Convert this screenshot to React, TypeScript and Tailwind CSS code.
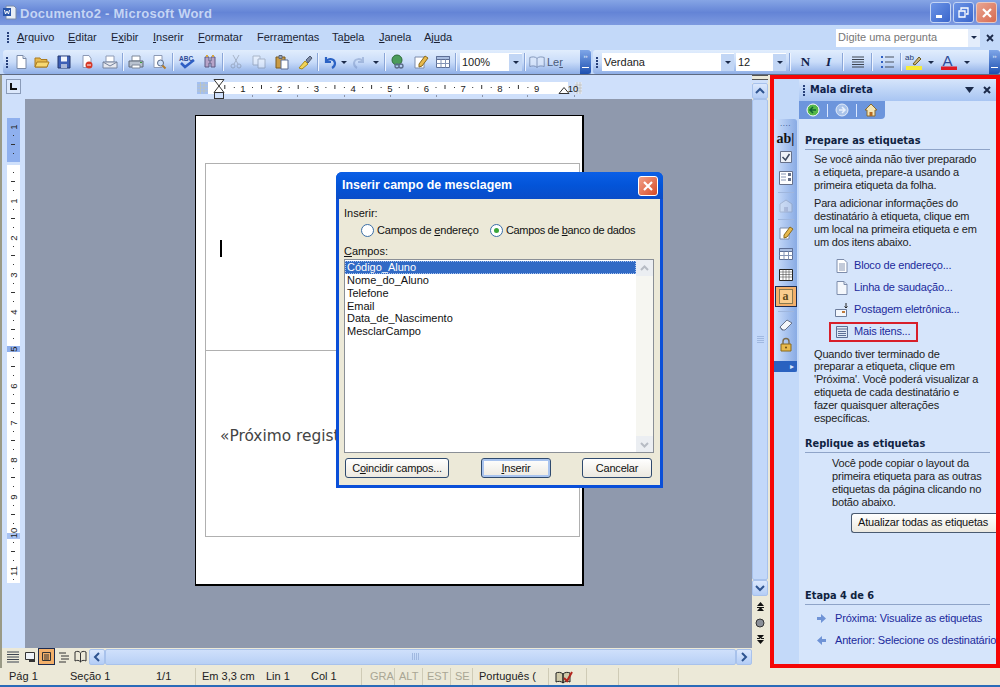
import React from "react";

const FONT = { fontFamily: '"Liberation Sans", Arial, sans-serif' };

type IP = { children: React.ReactNode; w?: number; cls?: string };
const Ico = ({ children, w = 16, cls = "" }: IP) => (
  <svg width={w} height="16" viewBox={`0 0 ${w} 16`} className={cls}>{children}</svg>
);

const NewDoc = () => <Ico><path d="M4 1.500h6l3 3v10H4z" fill="#fff" stroke="#7a8aa8" /><path d="M10 1.500v3h3" fill="#dfe8f8" stroke="#7a8aa8" /></Ico>;
const Open = () => <Ico><path d="M1 4h5l1 1.500h6V13H1z" fill="#e8b94c" stroke="#a87a20" /><path d="M3 8h12l-2 5H1z" fill="#f7d872" stroke="#a87a20" /></Ico>;
const Save = () => <Ico><path d="M2 2h12v12H2z" fill="#3d5fb5" stroke="#24386f" /><path d="M5 2.500h6v5H5z" fill="#f2f5fb" /><path d="M5 10h6v4H5z" fill="#a9b7d8" /></Ico>;
const Perm = () => <Ico><path d="M4 1.500h6l2 3v9H4z" fill="#fff" stroke="#8d9ab5" /><circle cx="10" cy="11" r="3.500" fill="#d63a2a" /><path d="M8 11h4" stroke="#fff" /></Ico>;
const MailI = () => <Ico><path d="M4 2h8v6H4z" fill="#fff" stroke="#8d9ab5" /><path d="M1 8h14v6H1z" fill="#e6e8ee" stroke="#77849e" /><path d="M1 8l7 4 7-4" fill="none" stroke="#77849e" /></Ico>;
const Print = () => <Ico><path d="M4 2h8v5H4z" fill="#fff" stroke="#7d8798" /><path d="M1 7h14v6H1z" fill="#b9c2cf" stroke="#5e6878" /><path d="M4 11h8v3H4z" fill="#fff" stroke="#7d8798" /><path d="M12 8.500h2" stroke="#3d9a3d" /></Ico>;
const Preview = () => <Ico><path d="M3 1.500h8v12H3z" fill="#fff" stroke="#8d9ab5" /><circle cx="9.500" cy="9" r="3" fill="#cfe2fb" stroke="#5a6a88" /><path d="M11.500 11.500l3 3" stroke="#b27b2b" strokeWidth="2" /></Ico>;
const Spell = () => <Ico w={18}><text x="1" y="6.500" fontSize="6.500" fontWeight="700" fill="#2e4a96" fontFamily="Liberation Sans">ABC</text><path d="M3 9l4 4 9-7" fill="none" stroke="#2e5fc4" strokeWidth="2.500" /></Ico>;
const Research = () => <Ico><path d="M3 3h4v4h2V3h4v10H9V9H7v4H3z" fill="#b7a4c8" stroke="#5d5a82" /><path d="M4 1h2v2H4zM10 1h2v2h-2z" fill="#d6a73e" /></Ico>;
const Cut = () => <Ico cls="opacity-40"><path d="M5 1l5 9M11 1L6 10" stroke="#6b7280" /><circle cx="5" cy="12" r="2" fill="none" stroke="#6b7280" /><circle cx="11" cy="12" r="2" fill="none" stroke="#6b7280" /></Ico>;
const Copy = () => <Ico cls="opacity-40"><path d="M2 2h7v9H2z" fill="#fff" stroke="#6b7280" /><path d="M7 5h7v9H7z" fill="#fff" stroke="#6b7280" /></Ico>;
const Paste = () => <Ico><path d="M2 3h9v11H2z" fill="#c99b45" stroke="#7b5a1e" /><path d="M5 1.500h3v3H5z" fill="#9aa5b8" stroke="#5d6678" /><path d="M7 6h7v9H7z" fill="#fff" stroke="#5d6f96" /></Ico>;
const Painter = () => <Ico><path d="M2 14l6-7 3 3-6 5z" fill="#f2d456" stroke="#a98a1c" /><path d="M9 6l4-4 2 2-4 5z" fill="#7e8ba5" stroke="#4d5870" /></Ico>;
const Undo = () => <Ico><path d="M5 3v5h5M5 8c2-4 8-4 9 1 0 2-1 4-3 5" fill="none" stroke="#2b62c4" strokeWidth="2.200" /></Ico>;
const Redo = () => <Ico cls="opacity-40"><path d="M11 3v5H6M11 8C9 4 3 4 2 9c0 2 1 4 3 5" fill="none" stroke="#6b85b8" strokeWidth="2" /></Ico>;
const Web = () => <Ico><circle cx="7" cy="6" r="5" fill="#4b9c5a" stroke="#2d6b3a" /><path d="M5 12a2 2 0 0 1 4 0a2 2 0 0 1-4 0zM9 12a2 2 0 0 1 4 0a2 2 0 0 1-4 0z" fill="none" stroke="#5a6a88" strokeWidth="1.300" /></Ico>;
const DocEdit = () => <Ico><path d="M2 3h9v11H2z" fill="#fff" stroke="#7d8cab" /><path d="M6 10l6-8 3 2-6 8-3 1z" fill="#e8b94c" stroke="#8a6a1c" /></Ico>;
const TableI = ({ dim = false }: { dim?: boolean }) => <Ico cls={dim ? "opacity-40" : ""}><path d="M1.500 2.500h13v11h-13z" fill="#fff" stroke="#5d6f96" /><path d="M1.500 2.500h13v3h-13z" fill="#a9bde0" stroke="#5d6f96" /><path d="M6 5.500v8M10.500 5.500v8M1.500 9.500h13" stroke="#8494b5" /></Ico>;
const BookI = () => <Ico w={18}><path d="M1 3c3-1 6-1 8 1 2-2 5-2 8-1v10c-3-1-6-1-8 1-2-2-5-2-8-1zM9 4v10" fill="#dce8fb" stroke="#5a6f98" /></Ico>;
const Bars = ({ cls = "" }: { cls?: string }) => <Ico cls={cls}><path d="M2 3h12M2 5.500h12M2 8h12M2 10.500h12M2 13h12" stroke="#3d4450" /></Ico>;
const BulletsI = () => <Ico><path d="M6 3h9M6 8h9M6 13h9" stroke="#48505e" /><path d="M2 2h2v2H2zM2 7h2v2H2zM2 12h2v2H2z" fill="#2e5fc4" /></Ico>;
const Highlight = () => <svg width="18" height="18" viewBox="0 0 18 18"><text x="0" y="7" fontSize="8" fill="#1e3a70" fontFamily="Liberation Sans">ab</text><path d="M8 11l6-7 2 2-6 6z" fill="#c9b37a" stroke="#6b5a20" /><path d="M1 13h16v4H1z" fill="#f5ec3a" /></svg>;
const ColorA = () => <svg width="18" height="18" viewBox="0 0 18 18"><text x="2.500" y="12.500" fontSize="15" fontWeight="400" fill="#2e4a96" fontFamily="Liberation Sans">A</text><path d="M1 13.500h16v3.500H1z" fill="#e01b24" /></svg>;

const Sep = () => <div className="w-px h-[18px] mx-[1px] bg-[#8aa6d8] border-r border-r-[#eef4ff] box-content shrink-0" />;
const SepM = () => <div className="w-px h-[18px] mx-[2px] bg-[#8aa6d8] border-r border-r-[#eef4ff] box-content shrink-0" />;
const SepW = () => <div className="w-px h-[18px] mx-[3px] bg-[#8aa6d8] border-r border-r-[#eef4ff] box-content shrink-0" />;
const Drop = () => <span className="w-0 h-0 mx-[4px] border-x-[3px] border-x-transparent border-t-[3px] border-t-[#1b2a4a]" />;
const Slot = ({ children, w = 23 }: { children: React.ReactNode; w?: number }) => (
  <div className="flex items-center justify-center shrink-0 h-[22px]" style={{ width: w }}>{children}</div>
);
const Grip = () => (
  <div className="flex flex-col gap-[1px] w-[4px] ml-[3px] shrink-0">
    {[0, 1, 2, 3].map(i => <div key={i} className="w-[2px] h-[2px] bg-[#27407a]" />)}
  </div>
);
const Overflow = () => (
  <div className="w-[11px] h-[24px] shrink-0 bg-gradient-to-b from-[#7fa6e8] to-[#1c4fb0] rounded-r-[3px] flex flex-col items-center justify-between py-[3px]">
    <span className="text-[6px] leading-[6px] text-white">››</span>
    <span className="w-[7px] h-[4px] border-t border-t-white" />
  </div>
);
const ComboArrow = () => (
  <div className="w-[13px] h-[17px] bg-[#c2d6f5] flex items-center justify-center">
    <span className="w-0 h-0 border-x-[3px] border-x-transparent border-t-[3px] border-t-[#1b2a4a]" />
  </div>
);
const Combo = ({ text, w }: { text: string; w: number }) => (
  <div className="h-[18px] bg-white flex items-center justify-between shrink-0 pl-[2px]" style={{ width: w }}>
    <span className="text-[11px] text-[#222]">{text}</span>
    <ComboArrow />
  </div>
);

const Menu = ({ pre, u, post, w }: { pre: string; u: string; post: string; w: number }) => (
  <span className="text-[#1a1f33] shrink-0" style={{ width: w }}>{pre}<u>{u}</u>{post}</span>
);

const TopRuler = () => {
  const xn = (n: number) => 13.300 + 36.700 * n;
  return (
    <svg width="396" height="24" viewBox="0 0 396 24" className="ml-[172px] shrink-0">
      <rect x="4" y="7" width="11" height="12" fill="#8fb0ee" opacity=".7" />
      <path d="M7.500 7v12M11 7v12M4 10h11M4 13h11M4 16h11" stroke="#c9c7a8" strokeWidth=".6" />
      <rect x="15" y="7" width="360" height="12" fill="#fff" />
      <rect x="382" y="7" width="7" height="12" fill="#dfe7f5" />
      <path d="M384 7v12M387 7v12M382 10h7M382 13h7M382 16h7" stroke="#b9b7a8" strokeWidth=".6" />
      {[1, 2, 3, 4, 5, 6, 7, 8, 9, 10].map(n => (
        <text key={n} x={n === 10 ? 380 : xn(n)} y="16.500" fontSize="9.500" textAnchor="middle" fill="#222" fontFamily="Liberation Sans">{n}</text>
      ))}
      {[0, 1, 2, 3, 4, 5, 6, 7, 8, 9].map(n => (
        <g key={n} fill="#333">
          {n > 0 && n < 9 && <rect x={xn(n) + 9} y="12" width="1" height="1" />}
          {n < 9 && <rect x={xn(n) + 18} y="10" width="1" height="4" />}
          {n < 9 && <rect x={xn(n) + 27.500} y="12" width="1" height="1" />}
        </g>
      ))}
      {[59, 104, 151, 197, 243, 289, 334, 381].map(x => <rect key={x} x={x} y="20" width="1" height="2" fill="#8b94a8" />)}
      <path d="M21 4.500h10l-5 6.500z" fill="#fff" stroke="#333" />
      <path d="M21 17.500h10l-5-6.500z" fill="#fff" stroke="#333" />
      <rect x="21.500" y="17.500" width="9" height="6" fill="#cfe0fb" stroke="#333" />
      <path d="M366 18.500l5-6 5 6z" fill="#fff" stroke="#333" />
    </svg>
  );
};

const VRuler = () => {
  const yn = (n: number) => 163 + 37 * n - 99;
  return (
    <svg width="23" height="550" viewBox="2 0 23 550" className="shrink-0">
      <rect x="7" y="19" width="13" height="44" fill="#8fb0ee" />
      <rect x="7" y="66" width="13" height="418" fill="#fff" />
      <rect x="7" y="434" width="13" height="6" fill="#a8c2f2" />
      <rect x="7" y="247" width="13" height="6" fill="#8fb0ee" />
      <text transform="translate(16.500 28) rotate(-90)" fontSize="9.500" textAnchor="middle" fill="#222" fontFamily="Liberation Sans">1</text>
      {[1, 2, 3, 4, 5, 6, 7, 8, 9, 10, 11].map(n => (
        <text key={n} transform={`translate(16.500 ${yn(n) + (n === 10 ? -1 : 0)}) rotate(-90)`} fontSize="9.500" textAnchor="middle" dx="-1" fill="#222" fontFamily="Liberation Sans">{n}</text>
      ))}
      {[-1, 0, 1, 2, 3, 4, 5, 6, 7, 8, 9, 10, 11].map(n => (
        <g key={n} fill="#333">
          <rect x="13" y={yn(n) + 9} width="1" height="1" />
          {n < 11 && <rect x="11" y={yn(n) + 18} width="4" height="1" />}
          {n < 11 && <rect x="13" y={yn(n) + 27} width="1" height="1" />}
        </g>
      ))}
    </svg>
  );
};

const ScrollBtn = ({ dir }: { dir: "up" | "down" | "left" | "right" }) => {
  const d = { up: "M3 9l4-4 4 4", down: "M3 5l4 4 4-4", left: "M9 3L5 7l4 4", right: "M5 3l4 4-4 4" }[dir];
  return (
    <div className="w-[16px] h-[16px] shrink-0 rounded-[2px] bg-gradient-to-b from-[#dbe8fd] to-[#b4cdf6] border border-[#a8c2ec] flex items-center justify-center">
      <svg width="14" height="14" viewBox="0 0 14 14"><path d={d} fill="none" stroke="#2e5490" strokeWidth="2" /></svg>
    </div>
  );
};

const RB = ({ on }: { on?: boolean }) => (
  <span className="w-[13px] h-[13px] rounded-full border border-[#3a6ea5] bg-white flex items-center justify-center shrink-0">
    {on && <span className="w-[5px] h-[5px] rounded-full bg-[#3aa63a]" />}
  </span>
);

const Btn = ({ children, w, def }: { children: React.ReactNode; w: number; def?: boolean }) => (
  <div style={{ width: w }} className={`h-[20px] rounded-[3px] border border-[#2f4a6e] flex items-center justify-center text-[11px] text-[#111] tracking-[-0.2px] bg-gradient-to-b from-white to-[#ece9e0] ${def ? "shadow-[inset_0_0_0_2px_#a9c4ef]" : ""}`}>
    {children}
  </div>
);

const Dialog = () => (
  <div className="absolute left-[336px] top-[172px] w-[327px] h-[316px] rounded-t-[6px] bg-[#0a4fd8] p-[3px] pt-0 flex flex-col z-10">
    <div className="h-[27px] shrink-0 flex items-center justify-between bg-gradient-to-b from-[#0b5fe6] via-[#0354d8] to-[#0a4cc8] -mx-[3px] pl-[6px] pr-[5px] rounded-t-[6px]">
      <span className="text-white text-[12.400px] font-bold">Inserir campo de mesclagem</span>
      <div className="w-[20px] h-[20px] rounded-[3px] border border-white bg-gradient-to-br from-[#f0a088] to-[#d6471f] flex items-center justify-center">
        <svg width="12" height="12" viewBox="0 0 12 12"><path d="M2 2l8 8M10 2l-8 8" stroke="#fff" strokeWidth="2.200" /></svg>
      </div>
    </div>
    <div className="flex-1 bg-[#ece9d8] px-[5px] pt-[7px] text-[11px] text-[#111] flex flex-col">
      <div className="leading-[14px]">Inserir:</div>
      <div className="flex items-center mt-[2px] ml-[17px] h-[17px] whitespace-nowrap tracking-[-0.2px]">
        <RB /><span className="ml-[3px] w-[101px] shrink-0">Campos de <u>e</u>ndereço</span>
        <span className="ml-[12px]"><RB on /></span><span className="ml-[3px] tracking-[-0.35px]">Campos de <u>b</u>anco de dados</span>
      </div>
      <div className="mt-[5px] leading-[14px]"><u>C</u>ampos:</div>
      <div className="mt-[1px] h-[194px] w-[310px] border border-[#8a8f96] bg-white flex text-[#111]">
        <div className="flex-1 min-w-0 pt-[1px] leading-[12.800px]">
          <div className="bg-[#316ac5] text-white pl-[2px] h-[13px] outline-dotted outline-1 outline-offset-[-1px] outline-[#aac4ee]">Código_Aluno</div>
          {["Nome_do_Aluno", "Telefone", "Email", "Data_de_Nascimento", "MesclarCampo"].map(t => <div key={t} className="pl-[2px]">{t}</div>)}
        </div>
        <div className="w-[17px] shrink-0 bg-[#f6f6f1] flex flex-col justify-between">
          <div className="h-[16px] bg-[#ebeef2] flex items-center justify-center"><svg width="11" height="9" viewBox="0 0 11 9"><path d="M2 6l3.500-3.500L9 6" fill="none" stroke="#b7bcc4" strokeWidth="2" /></svg></div>
          <div className="h-[16px] bg-[#ebeef2] flex items-center justify-center"><svg width="11" height="9" viewBox="0 0 11 9"><path d="M2 3l3.500 3.500L9 3" fill="none" stroke="#b7bcc4" strokeWidth="2" /></svg></div>
        </div>
      </div>
      <div className="mt-[5px] flex w-[310px] pl-[1px]">
        <Btn w={104}>C<u>o</u>incidir campos...</Btn>
        <div className="ml-[32px]"><Btn w={70} def><span><u>I</u>nserir</span></Btn></div>
        <div className="ml-[31px]"><Btn w={70}>Cancelar</Btn></div>
      </div>
    </div>
  </div>
);

const Heading = ({ children }: { children: string }) => (
  <div className="font-bold leading-[14px] tracking-normal text-[#0f2240] border-b border-b-[#8fa4c8] pb-[1px] mr-[6px]" style={{ fontFamily: '"DejaVu Sans", sans-serif', fontSize: 9.800 }}>{children}</div>
);

const Lnk = ({ icon, text }: { icon: React.ReactNode; text: string }) => (
  <div className="flex items-center h-[22px] ml-[26px]">
    <div className="w-[22px] flex justify-center">{icon}</div>
    <span className="ml-[1px] text-[#1c2a9c]">{text}</span>
  </div>
);

const Strip = () => {
  const dl = (c: React.ReactNode, on = false, h = 22) => (
    <div className={`w-[22px] shrink-0 flex items-center justify-center ${on ? "bg-[#f3b06a] border border-[#1d2b4f]" : ""}`} style={{ height: h }}>{c}</div>
  );
  const line = <div className="h-px w-[16px] my-[2px] bg-[#9fb6dd] mx-auto shrink-0" />;
  return (
    <div className="w-[23px] shrink-0 mt-[40px] h-[253px] bg-gradient-to-r from-[#cfe0fb] to-[#89abe4] rounded-tr-[3px] flex flex-col items-center">
      <div className="text-[8px] leading-[10px] tracking-[0.500px] text-[#27407a] h-[9px] shrink-0">....</div>
      {dl(<span className="text-[14px] font-semibold text-[#111]" style={{ fontFamily: '"Liberation Serif", serif' }}>ab|</span>, false, 20)}
      {dl(<Ico><path d="M2.500 2.500h11v11h-11z" fill="#eef2f8" stroke="#66718a" /><path d="M4.500 8l3 3 4-6" fill="none" stroke="#3d4a60" strokeWidth="1.500" /></Ico>, false, 18)}
      {dl(<Ico><path d="M1.500 1.500h13v13h-13z" fill="#fff" stroke="#66718a" /><path d="M3 4h5M3 7h5M3 10h5" stroke="#8796b3" /><path d="M10 3h3v3h-3zM10 8h3v3h-3z" fill="#66718a" /></Ico>, false, 24)}
      {line}
      {dl(<Ico cls="opacity-40"><path d="M2 6l6-4 6 4v8H2z" fill="#e8edf4" stroke="#8a93a4" /><path d="M6 9h4v5H6z" fill="#aab" /></Ico>)}
      {line}
      {dl(<DocEdit />)}
      {dl(<TableI />, false, 20)}
      {dl(<Ico><path d="M1.500 2.500h13v11h-13z" fill="#fff" stroke="#222" /><path d="M1.500 5h13M1.500 7.500h13M1.500 10h13M5 2.500v11M8 2.500v11M11 2.500v11" stroke="#333" strokeDasharray="1 1" /></Ico>)}
      {dl(<span className="text-[12px] font-bold text-[#5d4a1a] border border-[#8a7a50] px-[3px] leading-[13px] bg-[#f9cd8e]" style={{ fontFamily: '"Liberation Serif", serif' }}>a</span>, true, 21)}
      <div className="h-px w-[16px] mt-[4px] mb-[3px] bg-[#9fb6dd] shrink-0" />
      {dl(<Ico><path d="M2 10l7-7 5 3-7 7H4z" fill="#f4f6fa" stroke="#66718a" /><path d="M2 10l3 3" stroke="#66718a" /></Ico>, false, 20)}
      {dl(<Ico><path d="M3 7h10v7H3z" fill="#e8b94c" stroke="#8a6a1c" /><path d="M5 7V4.500a3 3 0 0 1 6 0V7" fill="none" stroke="#7a6a4a" strokeWidth="1.400" /><circle cx="8" cy="10.500" r="1" fill="#6b4a10" /></Ico>, false, 20)}
      <div className="mt-auto w-full h-[11px] bg-[#2a62c0] flex items-center justify-end pr-[3px] rounded-br-[2px]"><span className="text-[8px] leading-[8px] text-[#dbe8ff]">▸</span></div>
    </div>
  );
};

const Pane = () => (
  <div className="w-[230px] shrink-0 border-[4px] border-[#f50606] flex bg-[#c3d9f9] overflow-hidden relative">
    <Strip />
    <div className="w-[2px] shrink-0" />
    <div className="flex-1 min-w-0 flex flex-col">
      <div className="h-[22px] shrink-0 flex items-center bg-gradient-to-b from-[#d6e5fb] to-[#a8c5f2] pl-[1px] pr-[4px]">
        <Grip />
        <span className="ml-[3px] font-bold text-[#10224a]" style={{ fontFamily: '"DejaVu Sans", sans-serif', fontSize: 9.800 }}>Mala direta</span>
        <svg width="9" height="6" viewBox="0 0 9 6" className="ml-auto"><path d="M0 0h9L4.500 6z" fill="#1b2a4a" /></svg>
        <svg width="10" height="10" viewBox="0 0 10 10" className="ml-[8px]"><path d="M2 2l6 6M8 2L2 8" stroke="#1b2a4a" strokeWidth="2" /></svg>
      </div>
      <div className="flex-1 bg-[#d6e5fb] flex flex-col relative text-[#222] text-[11px] leading-[12.800px]">
        <div className="h-[18px] w-[86px] bg-[#6c95dc] rounded-br-[4px] flex items-center pl-[7px] gap-[7px]">
          <svg width="14" height="14" viewBox="0 0 14 14"><circle cx="7" cy="7" r="6" fill="#55b848" stroke="#fff" /><path d="M10 7H4m3-3L4 7l3 3" fill="none" stroke="#163" strokeWidth="1.500" /></svg>
          <div className="w-px h-[13px] bg-[#dbe8ff]" />
          <svg width="14" height="14" viewBox="0 0 14 14"><circle cx="7" cy="7" r="6" fill="#a9c3ea" stroke="#e3ecfa" /><path d="M4 7h6M7 4l3 3-3 3" fill="none" stroke="#e8f0fc" strokeWidth="1.500" /></svg>
          <div className="w-px h-[13px] bg-[#dbe8ff]" />
          <svg width="14" height="14" viewBox="0 0 14 14"><path d="M7 1L1 7h2v6h8V7h2z" fill="#f4e6b6" stroke="#8a6a2c" /><path d="M5.500 9h3v4h-3z" fill="#b66a22" /></svg>
        </div>
        <div className="pl-[6px] pt-[15px] flex-1 flex flex-col whitespace-nowrap tracking-[-0.18px]">
          <Heading>Prepare as etiquetas</Heading>
          <div className="pl-[9px] mt-[3px]">
            <p>Se você ainda não tiver preparado<br />a etiqueta, prepare-a usando a<br />primeira etiqueta da folha.</p>
            <p className="mt-[6px]">Para adicionar informações do<br />destinatário à etiqueta, clique em<br />um local na primeira etiqueta e em<br />um dos itens abaixo.</p>
          </div>
          <div className="mt-[6px]">
            <Lnk text="Bloco de endereço..." icon={<Ico><path d="M3 1.500h7l3 3v10H3z" fill="#fff" stroke="#7d8cab" /><path d="M5 6h6M5 8h6M5 10h6M5 12h6" stroke="#8796b3" /></Ico>} />
            <Lnk text="Linha de saudação..." icon={<Ico><path d="M3 1.500h7l3 3v10H3z" fill="#f4f7fc" stroke="#7d8cab" /><path d="M10 1.500v3h3" fill="#dde6f5" stroke="#7d8cab" /></Ico>} />
            <Lnk text="Postagem eletrônica..." icon={<Ico><path d="M1.500 7.500h11v7h-11z" fill="#f4f7fc" stroke="#6d7c9a" /><path d="M12 1v5M10.500 4.500L12 6l1.500-1.500" fill="none" stroke="#222" /><path d="M8 9h3v2H8z" fill="#c07a3a" /></Ico>} />
            <div className="relative h-[22px]">
              <Lnk text="Mais itens..." icon={<Ico><path d="M2.500 2.500h11v11h-11z" fill="#dfe8f6" stroke="#5d6f96" /><path d="M2.500 5h11M4 7.500h8M4 9.500h8M4 11.500h8" stroke="#5d6f96" /></Ico>} />
              <div className="absolute left-[24px] top-[1px] w-[89px] h-[20px] border-2 border-[#d81f2a]" />
            </div>
          </div>
          <div className="pl-[9px] mt-[5px]">
            <p>Quando tiver terminado de<br />preparar a etiqueta, clique em<br />'Próxima'. Você poderá visualizar a<br />etiqueta de cada destinatário e<br />fazer quaisquer alterações<br />específicas.</p>
          </div>
          <div className="mt-[13px]"><Heading>Replique as etiquetas</Heading></div>
          <div className="pl-[27px] mt-[4px]">
            <p>Você pode copiar o layout da<br />primeira etiqueta para as outras<br />etiquetas da página clicando no<br />botão abaixo.</p>
          </div>
          <div className="ml-[46px] mt-[4px] h-[20px] w-[150px] rounded-l-[3px] bg-gradient-to-b from-white to-[#ece9e0] border border-[#4a5a70] border-r-0 flex items-center pl-[6px] text-[#111]">Atualizar todas as etiquetas</div>
          <div className="mt-auto">
            <Heading>Etapa 4 de 6</Heading>
            <div className="flex items-center h-[22px] mt-[2px] ml-[12px] gap-[9px] text-[#1c2a9c]">
              <svg width="9" height="9" viewBox="0 0 9 9" className="shrink-0"><path d="M0 3h4V0l5 4.500L4 9V6H0z" fill="#6f93d6" /></svg>Próxima: Visualize as etiquetas
            </div>
            <div className="flex items-center h-[22px] ml-[12px] gap-[9px] text-[#1c2a9c] mb-[13px]">
              <svg width="9" height="9" viewBox="0 0 9 9" className="shrink-0"><path d="M9 3H5V0L0 4.500 5 9V6h4z" fill="#6f93d6" /></svg>Anterior: Selecione os destinatários
            </div>
          </div>
        </div>
      </div>
    </div>
  </div>
);

const Field = ({ w, children, cls = "" }: { w: number; children?: React.ReactNode; cls?: string }) => (
  <div style={{ width: w }} className={`h-full shrink-0 border-r border-r-[#cfcbb6] flex items-center pl-[1px] ${cls}`}>{children}</div>
);

export default function App() {
  return (
    <div className="w-[1000px] h-[687px] relative overflow-hidden flex flex-col bg-[#ece9d8] text-[11px]" style={FONT}>
      {/* Title */}
      <div className="h-[25px] shrink-0 bg-gradient-to-b from-[#86a5e5] via-[#6484d6] to-[#7d9ae0] flex items-center pl-[3px] pr-[3px]">
        <svg width="14" height="15" viewBox="0 0 14 15"><path d="M3 1h8l2 2v11H3z" fill="#e8edf6" stroke="#7a8aa8" /><path d="M0 3h8v8H0z" fill="#2a55a8" /><path d="M1.500 5l1 4 1.500-3 1.500 3 1-4" fill="none" stroke="#fff" /></svg>
        <span className="ml-[3px] mt-[2px] text-[13px] tracking-[0.25px] font-bold text-[#c5d5f4]">Documento2 - Microsoft Word</span>
        <div className="ml-auto flex gap-[2px]">
          {[0, 1].map(i => (
            <div key={i} className="w-[21px] h-[21px] rounded-[3px] border border-[#c5d5f4] bg-gradient-to-br from-[#6d94e6] to-[#3a66cc] flex items-center justify-center">
              {i === 0 ? <span className="w-[6px] h-[3px] mt-[8px] -ml-[4px] bg-white" /> :
                <svg width="11" height="11" viewBox="0 0 11 11"><path d="M3 3V1h7v6H8M1 4h6v6H1z" fill="none" stroke="#fff" strokeWidth="1.300" /></svg>}
            </div>
          ))}
          <div className="w-[21px] h-[21px] rounded-[3px] border border-[#e8c8c0] bg-gradient-to-br from-[#e8a592] to-[#d86a50] flex items-center justify-center">
            <svg width="12" height="12" viewBox="0 0 12 12"><path d="M2 2l8 8M10 2l-8 8" stroke="#fff" strokeWidth="2.200" /></svg>
          </div>
        </div>
      </div>
      {/* Menu */}
      <div className="h-[25px] shrink-0 bg-[#c3d9f9] flex items-center pl-[4px] pr-[5px]">
        <Grip />
        <div className="ml-[6px] flex">
          <Menu pre="" u="A" post="rquivo" w={51} />
          <Menu pre="" u="E" post="ditar" w={43} />
          <Menu pre="E" u="x" post="ibir" w={42} />
          <Menu pre="" u="I" post="nserir" w={45} />
          <Menu pre="" u="F" post="ormatar" w={59} />
          <Menu pre="Ferra" u="m" post="entas" w={75} />
          <Menu pre="Ta" u="b" post="ela" w={47} />
          <Menu pre="" u="J" post="anela" w={45} />
          <Menu pre="Aj" u="u" post="da" w={30} />
        </div>
        <div className="ml-auto w-[132px] h-[18px] bg-white text-[#777] flex items-center pl-[2px]">Digite uma pergunta</div>
        <div className="w-[12px] h-[18px] flex items-center justify-center bg-[#e4edfb]"><span className="w-0 h-0 border-x-[3px] border-x-transparent border-t-[3px] border-t-[#1b2a4a]" /></div>
        <svg width="10" height="10" viewBox="0 0 10 10" className="ml-[5px]"><path d="M2 2l6 6M8 2L2 8" stroke="#1b2a4a" strokeWidth="1.800" /></svg>
      </div>
      {/* Toolbars */}
      <div className="h-[24px] shrink-0 bg-[#c3d9f9] flex items-center pl-[3px]">
        <div className="flex items-center h-[24px] w-[588px] shrink-0 bg-gradient-to-b from-[#e1edfd] via-[#c9dcf9] to-[#8eaee6] rounded-l-[3px]">
          <Grip />
          <div className="flex items-center">
            <Slot w={21}><NewDoc /></Slot><Slot w={22}><Open /></Slot><Slot w={22}><Save /></Slot><Slot w={23}><Perm /></Slot><Slot w={23}><MailI /></Slot><Sep />
            <Slot w={22}><Print /></Slot><Slot w={24}><Preview /></Slot><Sep />
            <Slot w={24}><Spell /></Slot><Slot w={22}><Research /></Slot><Sep />
            <Slot w={22}><Cut /></Slot><Slot w={23}><Copy /></Slot><Slot w={23}><Paste /></Slot><Slot w={23}><Painter /></Slot><Sep />
            <Slot w={17}><Undo /></Slot><Drop /><Slot w={18}><Redo /></Slot><Drop /><Sep />
            <Slot w={22}><Web /></Slot><Slot w={23}><DocEdit /></Slot><Slot w={22}><TableI /></Slot><Sep />
            <div className="ml-[2px]"><Combo text="100%" w={62} /></div>
            <div className="ml-[1px]"><Sep /></div>
            <div className="flex items-center text-[#4a5a78] ml-[1px]"><span className="opacity-70 scale-90"><BookI /></span><span className="ml-[1px]">Le<u>r</u></span></div>
          </div>
          <div className="ml-auto"><Overflow /></div>
        </div>
        <div className="flex items-center h-[24px] flex-1 ml-[2px] bg-gradient-to-b from-[#e1edfd] via-[#c9dcf9] to-[#8eaee6] rounded-l-[3px]">
          <Grip />
          <div className="ml-[2px]"><Combo text="Verdana" w={132} /></div>
          <div className="ml-[2px]"><Combo text="12" w={50} /></div>
          <SepW />
          <Slot w={23}><span className="font-bold text-[13px] text-[#10224a]" style={{ fontFamily: '"Liberation Serif", serif' }}>N</span></Slot>
          <Slot w={23}><span className="italic font-bold text-[13px] text-[#10224a]" style={{ fontFamily: '"Liberation Serif", serif' }}>I</span></Slot>
          <SepM />
          <Slot w={23}><Bars /></Slot>
          <SepM />
          <Slot w={23}><BulletsI /></Slot>
          <SepM />
          <Slot w={20}><Highlight /></Slot><Drop />
          <Slot w={22}><ColorA /></Slot><Drop />
          <div className="ml-auto"><Overflow /></div>
        </div>
      </div>
      <div className="h-px shrink-0 bg-[#5e6a80]" />
      {/* Main */}
      <div className="flex-1 min-h-0 flex bg-[#ece9d8]">
        <div className="w-[770px] shrink-0 flex flex-col pb-[3px] relative border-l-2 border-l-[#9a9a86]">
          <div className="flex-1 min-h-0 flex">
            <div className="flex-1 min-w-0 flex flex-col">
              <div className="h-[24px] shrink-0 bg-[#cfe0fb] flex relative">
                <div className="ml-[4px] mt-[4px] w-[15px] h-[15px] border border-[#8a9bb8] bg-[#dce8fb] flex items-center justify-center shrink-0">
                  <svg width="9" height="9" viewBox="0 0 9 9"><path d="M2 1v6h6" fill="none" stroke="#111" strokeWidth="2" /></svg>
                </div>
                <TopRuler />
              </div>
              <div className="flex-1 min-h-0 flex bg-[#8f99ad]">
                <div className="w-[23px] shrink-0 bg-[#cfe0fb] overflow-hidden"><VRuler /></div>
                <div className="flex-1 min-w-0 pl-[170px] pt-[16px]">
                  <div className="w-[389px] h-[471px] bg-white border border-black border-r-2 border-b-2 pt-[47px] pl-[9px]">
                    <div className="w-[375px] h-[374px] border border-[#b0b0b0] flex flex-col">
                      <div className="h-[187px] border-b border-b-[#b0b0b0] pt-[76px] pl-[14px]">
                        <div className="w-[2px] h-[17px] bg-black" />
                      </div>
                      <div className="pt-[75px] pl-[14px] text-[15.400px] leading-[20px] text-[#444] whitespace-nowrap" style={{ fontFamily: '"DejaVu Sans", sans-serif' }}>«Próximo registro»</div>
                    </div>
                  </div>
                </div>
              </div>
            </div>
            <div className="w-[18px] shrink-0 bg-[#ece9d8] flex flex-col">
              <div className="w-[16px] h-[5px] shrink-0 bg-[#ece9d8] border-b border-t border-[#555]" />
              <div className="h-[3px] shrink-0 w-[16px] bg-[#cfe0fb]" />
              <ScrollBtn dir="up" />
              <div className="flex-1 w-[16px] bg-[#c3d8f9] border border-[#a8c2ec] rounded-[2px] flex items-center justify-center">
                <div className="w-[7px] flex flex-col gap-[1px]">{[0, 1, 2, 3].map(i => <div key={i} className="h-px bg-[#a0b8e0]" />)}</div>
              </div>
              <ScrollBtn dir="down" />
              <div className="h-[52px] shrink-0 w-[16px] flex flex-col items-center justify-around pt-[2px]">
                <svg width="9" height="9" viewBox="0 0 9 9"><path d="M4.500 0L8 4H1zM1 5h7v1H1zM4.500 5L8 9H1z" fill="#111" /></svg>
                <svg width="10" height="10" viewBox="0 0 10 10"><circle cx="5" cy="5" r="4" fill="#8a8f98" stroke="#333" /></svg>
                <svg width="9" height="9" viewBox="0 0 9 9"><path d="M4.500 4L8 0H1zM1 3h7v1H1zM4.500 9L8 5H1z" fill="#111" /></svg>
              </div>
            </div>
          </div>
          <div className="h-[17px] shrink-0 flex items-center pl-[2px] pr-[18px]">
            <Slot w={17}><Bars /></Slot>
            <Slot w={17}><svg width="12" height="12" viewBox="0 0 12 12"><path d="M1.500 1.500h9v7h-9z" fill="#eef2f8" stroke="#333" /><path d="M5 8h6v3H5z" fill="#333" /></svg></Slot>
            <div className="w-[17px] h-[17px] bg-[#f3b06a] border border-[#1d2b4f] flex items-center justify-center shrink-0"><svg width="11" height="11" viewBox="0 0 11 11"><path d="M1.500 1.500h8v8h-8zM3 4h5M3 6h5M3 8h5" fill="none" stroke="#333" /></svg></div>
            <Slot w={18}><svg width="12" height="12" viewBox="0 0 12 12"><path d="M1 2h7M3 5h8M3 8h8M1 11h7" stroke="#333" /></svg></Slot>
            <Slot w={15}><svg width="13" height="13" viewBox="0 0 13 13"><path d="M1 2c2-1 4-1 5.500 1C8 1 10 1 12 2v9c-2-1-4-1-5.500 1C5 10 3 10 1 11zM6.500 3v9" fill="none" stroke="#333" /></svg></Slot>
            <div className="ml-[1px]"><ScrollBtn dir="left" /></div>
            <div className="flex-1 h-[16px] bg-gradient-to-b from-[#cfe0fb] to-[#b8d0f5] border border-[#a8c2ec] rounded-[2px] flex items-center justify-center">
              <div className="h-[7px] flex gap-[1px] mr-[10px]">{[0, 1, 2, 3].map(i => <div key={i} className="w-px bg-[#a0b8e0]" />)}</div>
            </div>
            <ScrollBtn dir="right" />
          </div>
        </div>
        <Pane />
      </div>
      {/* Status */}
      <div className="h-[17px] shrink-0 flex items-center text-[#222] bg-[#ece9d8]">
        <Field w={196} cls="pl-[9px]"><span className="w-[61px] shrink-0">Pág 1</span><span className="w-[86px] shrink-0">Seção 1</span><span>1/1</span></Field>
        <Field w={166} cls="pl-[6px]"><span className="w-[64px] shrink-0">Em 3,3 cm</span><span className="w-[45px] shrink-0">Lin 1</span><span>Col 1</span></Field>
        <Field w={33} cls="pl-[8px] text-[#a9a694]">GRA</Field>
        <Field w={28} cls="pl-[4px] text-[#a9a694]">ALT</Field>
        <Field w={28} cls="pl-[4px] text-[#a9a694]">EST</Field>
        <Field w={22} cls="pl-[4px] text-[#a9a694]">SE</Field>
        <Field w={76} cls="pl-[6px]">Português (</Field>
        <Field w={38} cls="pl-[6px]"><svg width="19" height="14" viewBox="0 0 19 14"><path d="M1 3c2-1 5-1 7 1v9c-2-2-5-2-7-1zM15 3c-2-1-5-1-7 1v9c2-2 5-2 7-1z" fill="#cfc9a8" stroke="#222" /><path d="M9 8l3 3 5-9" fill="none" stroke="#b3261e" strokeWidth="2" /></svg></Field>
        <Field w={32} />
        <Field w={60} />
      </div>
      <div className="h-[2px] shrink-0 bg-[#2a6bb8]" />
      <Dialog />
    </div>
  );
}
